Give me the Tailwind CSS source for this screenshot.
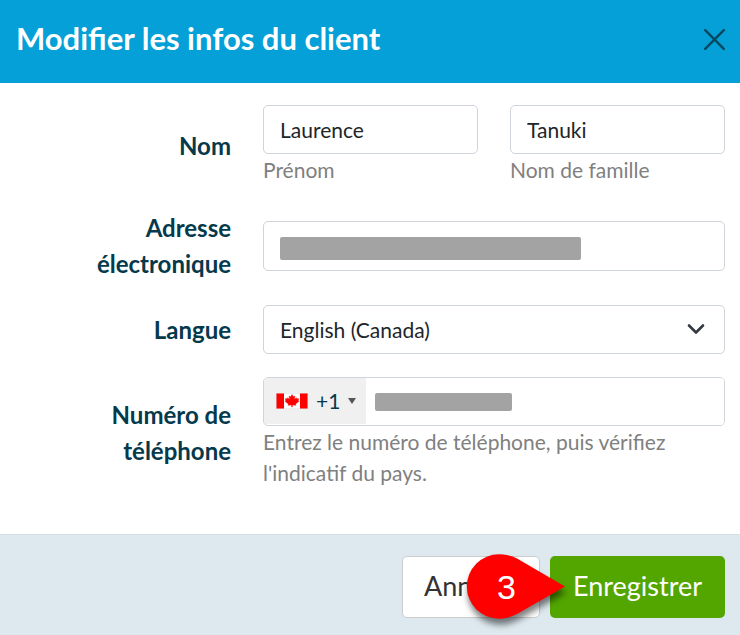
<!DOCTYPE html>
<html lang="fr">
<head>
    <meta charset="UTF-8">
    <meta name="viewport" content="width=device-width, initial-scale=1.0">
    <title>Modifier les infos du client</title>
    <script src="https://cdn.jsdelivr.net/npm/@tailwindcss/browser@4"></script>
</head>
<body class="min-h-screen bg-white font-['Lato',sans-serif] text-[#212529]">
    <form class="flex min-h-screen flex-col">
        <!-- Header -->
        <header class="flex h-[83px] items-center justify-between bg-[#05a0d7] pr-[15px] pb-1 pl-4">
            <h1 class="pb-1 text-[31px] leading-9 font-bold text-white">Modifier les infos du client</h1>
            <button type="button" aria-label="Fermer" class="text-[#05485f]">
                <svg class="block size-[21px]" viewBox="0 0 21 21" fill="none" stroke="currentColor" stroke-width="2.4" stroke-linecap="round"><path d="M1.2 1.2l18.6 18.6M19.8 1.2L1.2 19.8"></path></svg>
            </button>
        </header>

        <!-- Fields -->
        <div class="flex grow flex-col gap-[23px] pt-[22px] pr-[15px] pb-11 pl-4">
            <div class="grid grid-cols-3 items-center gap-x-8">
                <label for="firstName" class="text-right text-2xl leading-9 font-bold text-[#05394c]">Nom</label>
                <div>
                    <input id="firstName" type="text" value="Laurence" class="block h-[49px] w-full rounded-[5px] border border-[#ced4da] bg-white px-4 text-[21px] outline-none">
                    <label for="firstName" class="block pb-0.5 text-[21px] leading-[31px] text-[#808080]">Prénom</label>
                </div>
                <div>
                    <input id="lastName" type="text" value="Tanuki" class="block h-[49px] w-full rounded-[5px] border border-[#ced4da] bg-white px-4 text-[21px] outline-none">
                    <label for="lastName" class="block pb-0.5 text-[21px] leading-[31px] text-[#808080]">Nom de famille</label>
                </div>
            </div>

            <div class="grid grid-cols-3 items-center gap-x-8">
                <label for="email" class="text-right text-2xl leading-9 font-bold text-[#05394c]">Adresse électronique</label>
                <div class="relative col-span-2">
                    <input id="email" type="email" class="block h-[50px] w-full rounded-[5px] border border-[#ced4da] bg-white px-4 text-[21px] outline-none">
                    <span class="absolute top-4 left-[17px] h-[23px] w-[301px] rounded-xs bg-[#a3a3a3]"></span>
                </div>
            </div>

            <div class="grid grid-cols-3 items-center gap-x-8">
                <label for="language" class="text-right text-2xl leading-9 font-bold text-[#05394c]">Langue</label>
                <div class="relative col-span-2">
                    <select id="language" class="block h-[49px] w-full appearance-none rounded-[5px] border border-[#ced4da] bg-white px-4 text-[21px] outline-none">
                        <option>English (Canada)</option>
                    </select>
                    <svg class="pointer-events-none absolute top-[18px] right-5 h-3 w-[18px]" viewBox="0 0 18 12" fill="none" stroke="#343a40" stroke-width="2.6" stroke-linecap="round" stroke-linejoin="round"><path d="M2 2.500l7 7 7-7"></path></svg>
                </div>
            </div>

            <div class="grid grid-cols-3 items-center gap-x-8">
                <label for="phone" class="text-right text-2xl leading-9 font-bold text-[#05394c]">Numéro de téléphone</label>
                <div class="col-span-2">
                    <div class="relative flex h-[49px] overflow-hidden rounded-[5px] border border-[#ced4da] bg-white">
                        <button type="button" aria-label="Indicatif du pays" class="mb-px flex w-[102px] shrink-0 items-center gap-2 bg-[#f0f0f0] pl-3 text-[21px] text-[#05394c]">
                            <svg class="h-4 w-8 shrink-0" viewBox="0 0 32 16">
                                <rect width="32" height="16" fill="#dcdcdc"></rect>
                                <rect x="8" y=".5" width="16" height="15" fill="#fff"></rect>
                                <path d="M.5.5H8v15H.5zM24 .5h7.500v15H24z" fill="#f00"></path>
                                <path d="M16 1.500l1.400 2.300 1.500-.7-.5 3.200 2-1.600.5 1.200 1.900-.3-.7 2 .9.600-3.400 2.800.3 1.300-3.500-.4v2.100h-.8v-2.100l-3.500.4.3-1.300L9 8.200l.9-.6-.7-2 1.900.3.500-1.200 2 1.600-.5-3.200 1.500.7z" fill="#f00" stroke="#f00" stroke-opacity=".4"></path>
                            </svg>
                            <span>+1</span>
                            <svg class="h-1.5 w-2 shrink-0" viewBox="0 0 8 6"><path d="M0 0h8L4 6z" fill="#555"></path></svg>
                        </button>
                        <input id="phone" type="tel" aria-describedby="phoneHelp" class="min-w-0 grow bg-white px-2 text-[21px] outline-none">
                        <span class="absolute top-[15px] left-[111px] h-[18px] w-[137px] rounded-xs bg-[#a3a3a3]"></span>
                    </div>
                    <p id="phoneHelp" class="text-[21px] leading-[31px] text-[#808080]">Entrez le numéro de téléphone, puis vérifiez l'indicatif du pays.</p>
                </div>
            </div>
        </div>

        <!-- Footer -->
        <footer class="flex justify-end gap-2.5 border-t border-[#d5dfe4] bg-[#dde9ef] pt-[21px] pr-[15px] pb-[17px]">
            <button type="button" class="h-[62px] rounded-[5px] border border-[#ccc] bg-white px-[21px] pb-0.5 text-[27px] text-[#333]">Annuler</button>
            <div class="relative">
                <button type="submit" class="h-[62px] rounded-[5px] bg-[#53a600] px-[23px] pb-0.5 text-[27px] text-white">Enregistrer</button>
                <!-- Step marker -->
                <div class="pointer-events-none absolute -top-0.5 -left-[83px] flex h-[65px] w-[98px] items-center pl-[30px]">
                    <svg class="absolute inset-0 size-full overflow-visible drop-shadow-[1px_6px_3px_rgba(0,0,0,0.5)]" viewBox="0 0 98 65"><path d="M98 32.500L50 4.500C44 1.500 38 .3 32 .3a32.200 32.200 0 0 0 0 64.400C38 64.700 44 63 50 60z" fill="#f00"></path></svg>
                    <span class="relative font-['Liberation_Sans',sans-serif] text-[34px] leading-none text-white">3</span>
                </div>
            </div>
        </footer>
    </form>
</body>
</html>
